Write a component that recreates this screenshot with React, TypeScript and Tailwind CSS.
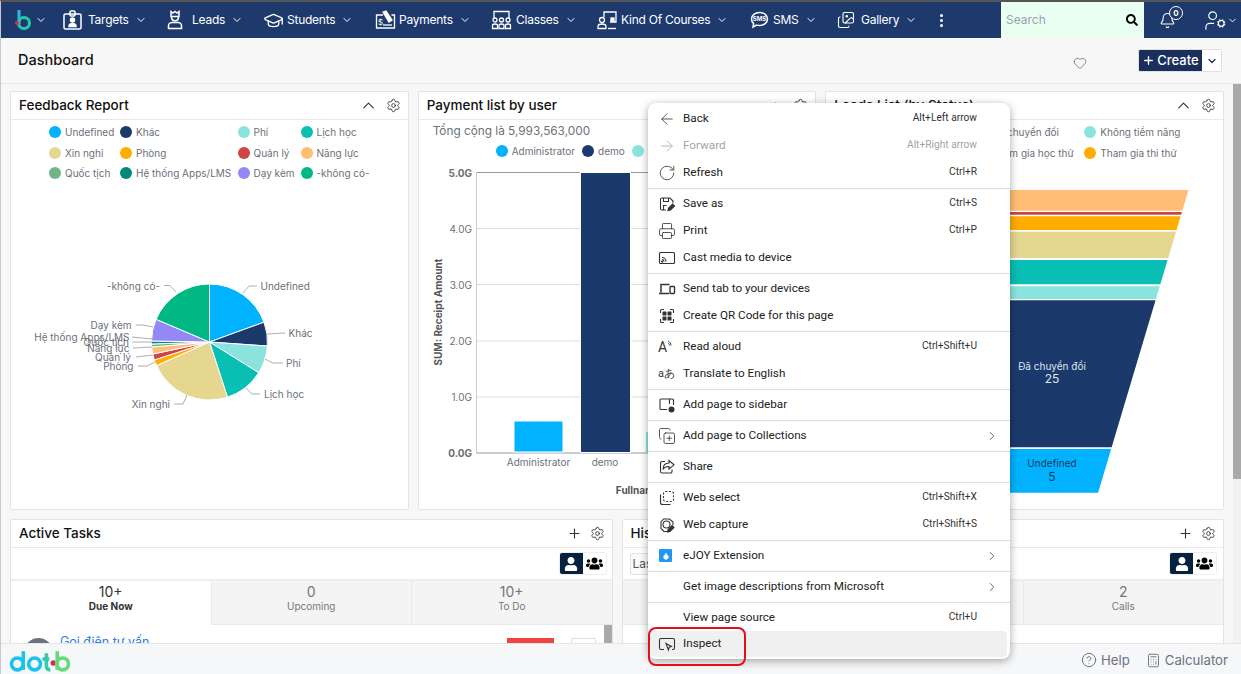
import type { ReactNode } from 'react';
import {
  ArrowLeft, ArrowRight, Bell, Calculator, ChevronDown, ChevronRight, ChevronUp, CircleHelp,
  CopyPlus, Droplet, GraduationCap, Heart, Images, Plus, Printer, RotateCw,
  Settings, UserCog,
} from 'lucide-react';
import { FaSearch, FaUser, FaUsers } from 'react-icons/fa';

const sans = 'font-["Inter",sans-serif]';

function TargetsIcon() {
  return (
    <svg width="19" height="20" viewBox="0 0 19 20" fill="none" stroke="white" strokeWidth="1.5">
      <rect x="1" y="4" width="17" height="15" rx="1.5" />
      <rect x="7" y="1" width="5" height="5" rx="1" />
      <circle cx="9.5" cy="10" r="2" fill="white" />
      <path d="M6 16.5c0-4 7-4 7 0z" fill="white" />
    </svg>
  );
}

function LeadsIcon() {
  return (
    <svg width="16" height="20" viewBox="0 0 16 20" fill="none" stroke="white" strokeWidth="1.5">
      <path d="M4 1.5l2 1.5 2-1.5 2 1.5 2-1.5v5H4z" />
      <path d="M4.5 7c0 5 7 5 7 0" />
      <path d="M1.5 18.5v-3c0-2 2-3 3.500-3h6c1.500 0 3.500 1 3.500 3v3z" />
    </svg>
  );
}

function PaymentsIcon() {
  return (
    <svg width="21" height="20" viewBox="0 0 21 20" fill="none" stroke="white" strokeWidth="1.3">
      <path d="M8 5H1.500v13h18V5h-3" />
      <path d="M8 2l3 -1 6 9-3 2z" fill="white" />
      <text x="3" y="15" fill="white" stroke="none" fontSize="8" fontFamily="Inter">$</text>
      <path d="M8 15h9" />
    </svg>
  );
}

function ClassesIcon() {
  return (
    <svg width="21" height="20" viewBox="0 0 21 20" fill="none" stroke="white" strokeWidth="1.300">
      <path d="M3 8V1.500h15V8" />
      {[4, 10.5, 17].map((x) => (
        <g key={x}>
          <circle cx={x} cy="10" r="2" />
          <path d={`M${x - 2.500} 18.500v-3c0-2 5-2 5 0v3z`} />
        </g>
      ))}
    </svg>
  );
}

function CoursesIcon() {
  return (
    <svg width="21" height="20" viewBox="0 0 21 20" fill="none" stroke="white" strokeWidth="1.300">
      <path d="M7 7V2h12v10h-6" />
      <rect x="14" y="8" width="3" height="3" fill="white" />
      <circle cx="5" cy="10" r="2.500" />
      <path d="M1 18.500v-2c0-2 2-2.500 4-2.500s4 .5 4 2.500v2z" />
      <path d="M11 18.500h8" />
    </svg>
  );
}

function SmsIcon() {
  return (
    <svg width="19" height="18" viewBox="0 0 19 18" fill="none" stroke="white" strokeWidth="1.500">
      <path d="M9.500 1.500c4.500 0 8 2.800 8 6.500s-3.500 6.500-8 6.500c-1 0-2-.1-3-.4L3 16l.6-3.400C2.300 11.400 1.500 9.800 1.500 8c0-3.700 3.500-6.500 8-6.500z" />
      <text x="9.500" y="10" textAnchor="middle" fill="white" stroke="none" fontSize="6" fontWeight="700" fontFamily="Inter">SMS</text>
    </svg>
  );
}

function BrandMark() {
  return (
    <svg width="17" height="22" viewBox="0 0 17 22">
      <path d="M4 1v14" stroke="#2bb8e6" strokeWidth="3" fill="none" />
      <circle cx="9" cy="14" r="5.500" stroke="#25c9a8" strokeWidth="3" fill="none" />
      <circle cx="2" cy="14" r="2" fill="#e0245e" />
    </svg>
  );
}

function DotbLogo() {
  return (
    <svg width="61" height="24" viewBox="0 0 62 24" fill="none" strokeWidth="3.600">
      <circle cx="8.500" cy="15" r="6" stroke="#1cc2ee" />
      <path d="M14.500 2v19" stroke="#1cc2ee" />
      <circle cx="26" cy="15" r="6" stroke="#1cc2ee" />
      <path d="M38 4v13c0 3 2 4 4 4" stroke="#35c9b0" />
      <path d="M34 10h7" stroke="#35c9b0" />
      <circle cx="45" cy="14" r="2.800" fill="#e0245e" stroke="none" />
      <path d="M49 2v19" stroke="#66d97e" />
      <circle cx="54.500" cy="15" r="6" stroke="#66d97e" />
    </svg>
  );
}

const navItems: { label: string; icon: ReactNode; cls: string }[] = [
  { label: 'Targets', icon: <TargetsIcon />, cls: 'w-[104px] gap-[6px]' },
  { label: 'Leads', icon: <LeadsIcon />, cls: 'w-[96px] gap-[9px]' },
  { label: 'Students', icon: <GraduationCap size={21} strokeWidth={1.500} />, cls: 'w-[112px] gap-[3px]' },
  { label: 'Payments', icon: <PaymentsIcon />, cls: 'w-[116px] gap-[3px]' },
  { label: 'Classes', icon: <ClassesIcon />, cls: 'w-[106px] gap-[4px]' },
  { label: 'Kind Of Courses', icon: <CoursesIcon />, cls: 'w-[153px] gap-[3px]' },
  { label: 'SMS', icon: <SmsIcon />, cls: 'w-[87px] gap-[4px]' },
  { label: 'Gallery', icon: <Images size={18} strokeWidth={1.500} />, cls: 'w-[100px] gap-[6px]' },
];

function NavBar() {
  return (
    <header className="flex h-[36px] shrink-0 items-center bg-[#1e3a6d] text-white">
      <div className="flex w-[62px] items-center pl-[14px]">
        <BrandMark />
        <ChevronDown size={12} className="ml-[3px]" />
      </div>
      {navItems.map((item) => (
        <div key={item.label} className={`flex shrink-0 items-center ${item.cls}`}>
          {item.icon}
          <span className="flex items-center gap-[6px]">
            <span className="text-[12px] leading-none tracking-[-0.25px]">{item.label}</span>
            <ChevronDown size={12} />
          </span>
        </div>
      ))}
      <div className="flex w-[64px] shrink-0 flex-col items-start gap-[2px] pl-[3px]">
        <span className="h-[3px] w-[3px] rounded-full bg-white" />
        <span className="h-[3px] w-[3px] rounded-full bg-white" />
        <span className="h-[3px] w-[3px] rounded-full bg-white" />
      </div>
      <div className="flex h-full w-[143px] shrink-0 items-center justify-between bg-[#e9fff2] pl-[5px] pr-[6px]">
        <span className="text-[12px] text-[#9aa3ad]">Search</span>
        <FaSearch size={12} className="text-black" />
      </div>
      <div className="relative ml-[15px] w-[45px] shrink-0">
        <Bell size={17} strokeWidth={1.500} />
        <span className="absolute left-[10px] top-[-6px] flex h-[14px] w-[14px] items-center justify-center rounded-full border border-white bg-[#1e3a6d] text-[8px] font-bold">0</span>
      </div>
      <UserCog size={23} strokeWidth={1.200} className="shrink-0" />
      <ChevronDown size={11} className="shrink-0" />
    </header>
  );
}

function SubHeader() {
  return (
    <div className="flex h-[46px] shrink-0 items-center border-b border-[#e8e8e8] bg-[#f7f7f7] pl-[17px] pr-[19px]">
      <h1 className="mb-[2px] text-[14.500px] font-medium text-[#111]">Dashboard</h1>
      <Heart size={14} strokeWidth={1.300} className="ml-auto mt-[5px] text-[#667]" />
      <div className="ml-[51px] flex h-[23px] overflow-hidden rounded-[2px] border border-[#e0e0e0]">
        <button className="flex w-[63px] items-center justify-center gap-[2px] bg-[#1a2f5c] text-[13px] font-medium text-white">
          <Plus size={13} strokeWidth={2.500} />
          Create
        </button>
        <span className="flex w-[19px] items-center justify-center bg-white text-[#1a2f5c]">
          <ChevronDown size={12} strokeWidth={2.500} />
        </span>
      </div>
    </div>
  );
}

function CardHeader({ title, action }: { title: string; action: 'collapse' | 'add' }) {
  return (
    <div className="flex h-[28px] shrink-0 items-center justify-between border-b border-[#e9e9e9] pl-[8px] pr-[7px]">
      <h2 className="text-[13.500px] font-medium leading-none text-[#111]">{title}</h2>
      <div className="flex items-center gap-[8px] text-[#333]">
        {action === 'collapse' ? <ChevronUp size={19} strokeWidth={1.400} /> : <Plus size={15} strokeWidth={1.800} />}
        <Settings size={15} strokeWidth={1.400} />
      </div>
    </div>
  );
}

function LegendItem({ color, label }: { color: string; label: string }) {
  return (
    <div className="flex items-center gap-[4px] whitespace-nowrap">
      <span className="h-[12px] w-[12px] shrink-0 rounded-full" style={{ backgroundColor: color }} />
      <span className="text-[10px] leading-none text-[#6e7079]">{label}</span>
    </div>
  );
}

const feedbackLegend = [
  ['Undefined', '#00b2ff'], ['Khác', '#1b3a6b'], ['Phí', '#8be3dd'], ['Lịch học', '#09bfb3'],
  ['Xin nghỉ', '#e5d690'], ['Phòng', '#ffae00'], ['Quản lý', '#cf4444'], ['Năng lực', '#ffbe73'],
  ['Quốc tịch', '#6eb589'], ['Hệ thống Apps/LMS', '#00897b'], ['Dạy kèm', '#9488f7'], ['-không có-', '#00b884'],
];

const pieSlices: [number, number, string][] = [
  [0, 70, '#00b2ff'], [70, 94, '#1b3a6b'], [94, 122, '#8be3dd'], [122, 162, '#09bfb3'], [162, 246, '#e5d690'],
  [246, 252, '#ffae00'], [252, 258, '#cf4444'], [258, 265, '#ffbe73'], [265, 268, '#6eb589'], [268, 271, '#00897b'],
  [271, 293, '#9488f7'], [293, 360, '#00b884'],
];

const pieLabels: [string, number, number, 'start' | 'end', string][] = [
  ['-không có-', 160, 290, 'end', '164,285.500 170,285.500 176,292'],
  ['Undefined', 260.500, 290, 'start', '243,293 249,286 257,286'],
  ['Khác', 288.500, 337, 'start', '267,334 285,333'],
  ['Phí', 286, 367, 'start', '265,359 273,363 283,363'],
  ['Lịch học', 264, 398, 'start', '246,388 252,394 260,394'],
  ['Xin nghỉ', 170, 407.500, 'end', '174,404 183,404 187,395'],
  ['Phòng', 133.500, 369.500, 'end', '138,366 147,366 155,362'],
  ['Quản lý', 131, 361, 'end', '136,357 153,355'],
  ['Năng lực', 129.500, 352, 'end', '133,348 152,347'],
  ['Quốc tịch', 129, 346, 'end', '132,342 152,342'],
  ['Hệ thống Apps/LMS', 129.500, 341, 'end', '132,337 152,339'],
  ['Dạy kèm', 131.500, 328.500, 'end', '136,325 143,325 153,327'],
];

function slicePath(from: number, to: number) {
  const cx = 209.500;
  const cy = 342;
  const r = 58;
  const pt = (deg: number) => {
    const a = (deg * Math.PI) / 180;
    return `${cx + r * Math.sin(a)} ${cy - r * Math.cos(a)}`;
  };
  return `M${cx} ${cy}L${pt(from)}A${r} ${r} 0 ${to - from > 180 ? 1 : 0} 1 ${pt(to)}Z`;
}

function FeedbackCard() {
  return (
    <section className="flex h-full flex-col rounded-[2px] border border-[#e3e3e3] bg-white">
      <CardHeader title="Feedback Report" action="collapse" />
      <div className="grid grid-cols-[71px_117.500px_63px_auto] gap-y-[8.500px] pl-[38px] pt-[6px]">
        {feedbackLegend.map(([label, color]) => (
          <LegendItem key={label} label={label} color={color} />
        ))}
      </div>
      <svg viewBox="11 184 396 325" className="mt-auto h-[325px] w-[396px]">
        {pieSlices.map(([from, to, color]) => (
          <path key={color} d={slicePath(from, to)} fill={color} stroke="white" strokeWidth="1" />
        ))}
        {pieLabels.map(([label, x, y, anchor, line]) => (
          <g key={label}>
            <polyline points={line} fill="none" stroke="#9a9a9a" strokeWidth="0.800" />
            <text x={x} y={y} textAnchor={anchor} fontSize="10" fill="#6e7079" fontFamily="Inter">{label}</text>
          </g>
        ))}
      </svg>
    </section>
  );
}

function PaymentCard() {
  const ticks = [['5.0G', 172.500], ['4.0G', 228.500], ['3.0G', 284.500], ['2.0G', 341], ['1.0G', 397], ['0.0G', 453]] as const;
  return (
    <section className="flex h-full flex-col rounded-[2px] border border-[#e3e3e3] bg-white">
      <CardHeader title="Payment list by user" action="collapse" />
      <p className="pl-[14px] pt-[4px] text-[11.800px] leading-[14px] text-[#6e7079]">Tổng cộng là 5,993,563,000</p>
      <div className="flex gap-[7px] pl-[77px] pt-[7px]">
        <LegendItem color="#00b2ff" label="Administrator" />
        <LegendItem color="#1b3a6b" label="demo" />
        <LegendItem color="#8be3dd" label="Tổng" />
      </div>
      <svg viewBox="419 165 396 344" className="mt-auto h-[344px] w-[396px]">
        {ticks.map(([label, y], i) => (
          <g key={label}>
            <line x1="476" x2="815" y1={y} y2={y} stroke={i === 0 ? '#999' : i === 5 ? '#ccc' : '#ddd'} strokeWidth={i === 5 ? 2 : 1} />
            <text x="472" y={y + 4} textAnchor="end" fontSize="10" fontFamily="Inter" fontWeight={i === 0 || i === 5 ? 700 : 400} fill="#6e7079">{label}</text>
          </g>
        ))}
        <line x1="476.500" x2="476.500" y1="172" y2="453" stroke="#ccc" />
        <rect x="514" y="421" width="49" height="31" fill="#00b2ff" stroke="white" />
        <rect x="580.500" y="172.500" width="50" height="280" fill="#1b3a6b" stroke="white" />
        <rect x="646" y="432" width="50" height="20" fill="#8be3dd" />
        <text x="538.500" y="465.500" textAnchor="middle" fontSize="10" fontFamily="Inter" fill="#6e7079">Administrator</text>
        <text x="605" y="465.500" textAnchor="middle" fontSize="10" fontFamily="Inter" fill="#6e7079">demo</text>
        <text x="638" y="494" textAnchor="middle" fontSize="10" fontWeight="700" fontFamily="Inter" fill="#555">Fullname</text>
        <text transform="translate(442 312) rotate(-90)" textAnchor="middle" fontSize="10" fontWeight="700" fontFamily="Inter" fill="#555">SUM: Receipt Amount</text>
      </svg>
    </section>
  );
}

const funnelBands: [number, number, string][] = [
  [190, 210.700, '#ffbe73'], [212, 214.700, '#cf4444'], [216.300, 230, '#ffae00'], [231.700, 258, '#e5d690'],
  [260, 284.300, '#09bfb3'], [286.300, 299, '#8be3dd'], [300.300, 447.300, '#1b3a6b'], [449, 492.700, '#00b2ff'],
];

function funnelPoints(top: number, bottom: number) {
  const half = (y: number) => 136.500 - (y - 190) * 0.2987;
  return `${1052 - half(top)},${top} ${1052 + half(top)},${top} ${1052 + half(bottom)},${bottom} ${1052 - half(bottom)},${bottom}`;
}

function LeadsCard() {
  return (
    <section className="flex h-full flex-col rounded-[2px] border border-[#e3e3e3] bg-white">
      <CardHeader title="Leads List (by Status)" action="collapse" />
      <div className="grid grid-cols-[109px_auto] justify-start gap-y-[8.500px] pl-[149px] pt-[6px]">
        <LegendItem color="#1b3a6b" label="Đã chuyển đổi" />
        <LegendItem color="#8be3dd" label="Không tiềm năng" />
        <LegendItem color="#09bfb3" label="Tham gia học thử" />
        <LegendItem color="#ffae00" label="Tham gia thi thử" />
      </div>
      <svg viewBox="826 184 396 325" className="mt-auto h-[325px] w-[396px]">
        {funnelBands.map(([top, bottom, color]) => (
          <polygon key={color} points={funnelPoints(top, bottom)} fill={color} />
        ))}
        <text x="1052" y="370" textAnchor="middle" fontSize="10" fontFamily="Inter" fill="#dfe5ee">Đã chuyển đổi</text>
        <text x="1052" y="383" textAnchor="middle" fontSize="12" fontFamily="Inter" fill="#dfe5ee">25</text>
        <text x="1052" y="467" textAnchor="middle" fontSize="10" fontFamily="Inter" fill="#123a5c">Undefined</text>
        <text x="1052" y="481" textAnchor="middle" fontSize="12" fontFamily="Inter" fill="#123a5c">5</text>
      </svg>
    </section>
  );
}

function ViewToggle() {
  return (
    <div className="flex h-[23px] overflow-hidden rounded-[3px] border border-[#eee]">
      <span className="flex w-[23px] items-center justify-center bg-[#06213d] text-white"><FaUser size={14} /></span>
      <span className="flex w-[23px] items-center justify-center bg-white text-black"><FaUsers size={17} /></span>
    </div>
  );
}

function Tab({ value, label, active }: { value: string; label: string; active?: boolean }) {
  return (
    <div className={`flex h-[44px] flex-1 flex-col items-center border-b border-l border-[#e9e9e9] pt-[2px] first:border-l-0 ${active ? 'border-b-transparent bg-white text-[#333]' : 'bg-[#f4f4f4] text-[#777]'}`}>
      <span className="text-[14px] leading-[18px]">{value}</span>
      <span className={`text-[10px] leading-[11px] ${active ? 'font-bold' : ''}`}>{label}</span>
    </div>
  );
}

function ActiveTasksCard() {
  return (
    <section className="flex h-[190px] flex-col rounded-[2px] border border-[#e3e3e3] bg-white">
      <CardHeader title="Active Tasks" action="add" />
      <div className="flex h-[33px] shrink-0 items-center justify-end border-b-2 border-[#eee] pr-[5px]"><ViewToggle /></div>
      <div className="flex shrink-0">
        <Tab value="10+" label="Due Now" active />
        <Tab value="0" label="Upcoming" />
        <Tab value="10+" label="To Do" />
      </div>
      <div className="flex flex-1">
        <div className="flex flex-1 items-start pl-[13px] pr-[8px] pt-[13px]">
          <span className="h-[29px] w-[29px] shrink-0 rounded-full bg-[#6b7280]" />
          <a className="ml-[7px] mt-[-5px] text-[12.500px] text-[#2a7de1]">Gọi điện tư vấn</a>
          <span className="ml-auto h-[18px] w-[47px] bg-[#ef4444]" />
          <span className="ml-[17px] h-[22px] w-[25px] rounded-[2px] border border-[#ddd]" />
        </div>
        <div className="h-full w-[8px] bg-[#a9a9a9]" />
      </div>
    </section>
  );
}

function HistoryCard() {
  return (
    <section className="flex h-[190px] flex-col rounded-[2px] border border-[#e3e3e3] bg-white">
      <CardHeader title="History" action="add" />
      <div className="flex h-[33px] shrink-0 items-center justify-between border-b-2 border-[#eee] pl-[7px] pr-[6px]">
        <span className="flex h-[22px] w-[120px] items-center rounded-[2px] border border-[#e3e3e3] bg-[#fafafa] pl-[2px] text-[12px] text-[#555]">Last 7 days</span>
        <ViewToggle />
      </div>
      <div className="flex shrink-0">
        <Tab value="0" label="Meetings" />
        <Tab value="0" label="Emails" />
        <Tab value="2" label="Calls" />
      </div>
    </section>
  );
}

function Dashboard() {
  return (
    <main className="flex min-h-0 flex-1">
      <div className="flex min-w-0 flex-1 flex-col gap-[9px] overflow-hidden pl-[9px] pr-[9px] pt-[7px]">
        <div className="grid h-[419px] shrink-0 grid-cols-3 gap-[9px]">
          <FeedbackCard />
          <PaymentCard />
          <LeadsCard />
        </div>
        <div className="grid shrink-0 grid-cols-2 gap-[9px]">
          <ActiveTasksCard />
          <HistoryCard />
        </div>
      </div>
      <div className="w-[8px] shrink-0 bg-[#f1f1f1]">
        <div className="h-[395px] bg-[#a9a9a9]" />
      </div>
    </main>
  );
}

function Footer() {
  return (
    <footer className="z-10 flex h-[31px] shrink-0 items-center border-t border-[#e5e5e5] bg-[#f6f7f9] pl-[8px] pr-[13px] pt-[3px] text-[13.200px] text-[#6b7280]">
      <DotbLogo />
      <div className="ml-auto flex items-center gap-[4px]">
        <CircleHelp size={16} strokeWidth={1.500} />
        Help
      </div>
      <div className="ml-[16px] flex items-center gap-[4px]">
        <Calculator size={15} strokeWidth={1.500} />
        Calculator
      </div>
    </footer>
  );
}

const glyph = { width: 18, height: 18, viewBox: '0 0 18 18', fill: 'none', stroke: '#333', strokeWidth: 1.100 };

function SaveAsIcon() {
  return (
    <svg {...glyph}>
      <path d="M8 15H4a1.500 1.500 0 0 1-1.500-1.500v-9A1.500 1.500 0 0 1 4 3h8l3 3v2" />
      <path d="M5.500 3v3.500h5V3M5.500 15v-4.500h3" />
      <path d="M10 15.500l.6-2.500 4-4 1.900 1.900-4 4z" fill="#333" />
    </svg>
  );
}

function CastIcon() {
  return (
    <svg {...glyph}>
      <rect x="1.500" y="3.500" width="15" height="11" rx="1" />
      <path d="M4 8.500a4 4 0 0 1 4 4M4 10.500a2 2 0 0 1 2 2" />
      <circle cx="4.200" cy="12.600" r=".6" fill="#333" />
    </svg>
  );
}

function SendTabIcon() {
  return (
    <svg {...glyph}>
      <path d="M3 12.500V4.500h8.500M1 13.500h10" strokeWidth="1.500" />
      <rect x="12" y="6.500" width="4.500" height="7" rx=".7" strokeWidth="1.400" />
    </svg>
  );
}

function QrIcon() {
  return (
    <svg {...glyph}>
      <path d="M2.500 6V3.500a1 1 0 0 1 1-1H6M12 2.500h2.500a1 1 0 0 1 1 1V6M15.500 12v2.500a1 1 0 0 1-1 1H12M6 15.500H3.500a1 1 0 0 1-1-1V12" />
      <g fill="#333" stroke="none">
        <rect x="4.500" y="4.500" width="4" height="4" rx=".6" />
        <rect x="9.500" y="4.500" width="4" height="4" rx=".6" />
        <rect x="4.500" y="9.500" width="4" height="4" rx=".6" />
        <rect x="9.500" y="9.500" width="4" height="4" rx=".6" />
      </g>
    </svg>
  );
}

function AloudIcon() {
  return (
    <span className="flex w-[18px] items-start text-[14px] leading-none text-[#333]">
      A
      <svg width="7" height="9" viewBox="0 0 7 9" fill="none" stroke="#333" strokeWidth="0.900">
        <path d="M1 1c2 1 3 2.500 3 4.500M1 3c1 .6 1.500 1.500 1.500 2.500" />
      </svg>
    </span>
  );
}

function SidebarIcon() {
  return (
    <svg {...glyph}>
      <path d="M9 13.500H3a1 1 0 0 1-1-1v-8.500a1 1 0 0 1 1-1h11.500a1 1 0 0 1 1 1V9M11.500 3v5" />
      <circle cx="13.500" cy="13.500" r="3" fill="#333" stroke="none" />
    </svg>
  );
}

function ShareIcon() {
  return (
    <svg {...glyph}>
      <path d="M7 3.500H4a1.500 1.500 0 0 0-1.500 1.500v8.500A1.500 1.500 0 0 0 4 15h8.500a1.500 1.500 0 0 0 1.500-1.500v-2" />
      <path d="M11 2.500l5 4.300-5 4.200V8.500c-3 0-5 1-6 3 0-4 2-6.500 6-6.500z" />
    </svg>
  );
}

function WebSelectIcon() {
  return (
    <svg {...glyph}>
      <rect x="5.500" y="2.500" width="10" height="10" rx="2" strokeDasharray="2 1.500" />
      <path d="M3 5.500a1.500 1.500 0 0 0-.5 1v7a2 2 0 0 0 2 2h7a1.500 1.500 0 0 0 1-.5" />
    </svg>
  );
}

function WebCaptureIcon() {
  return (
    <svg {...glyph}>
      <path d="M2.500 6.500l3-3.500h6l3.500 3v3M3 6.500v6l3 3h3" />
      <circle cx="8.500" cy="8.500" r="3.500" />
      <path d="M9.500 16l.6-2.500 4-4 1.900 1.900-4 4z" fill="#333" />
    </svg>
  );
}

function InspectIcon() {
  return (
    <svg {...glyph}>
      <path d="M6 14.500H3a1.500 1.500 0 0 1-1.500-1.500V5A1.500 1.500 0 0 1 3 3.500h12A1.500 1.500 0 0 1 16.500 5v8a1.500 1.500 0 0 1-1.500 1.500h-1" />
      <path d="M8 8.500l5.500 3-2.300.8-.8 2.700z" />
    </svg>
  );
}

type MenuEntry = { label: string; icon?: ReactNode; shortcut?: string; arrow?: boolean; disabled?: boolean; hover?: boolean };

const ic = { size: 18, strokeWidth: 1.100, color: '#333' };

const menuGroups: MenuEntry[][] = [
  [
    { label: 'Back', icon: <ArrowLeft {...ic} />, shortcut: 'Alt+Left arrow' },
    { label: 'Forward', icon: <ArrowRight {...ic} color="#aaa" />, shortcut: 'Alt+Right arrow', disabled: true },
    { label: 'Refresh', icon: <RotateCw {...ic} />, shortcut: 'Ctrl+R' },
  ],
  [
    { label: 'Save as', icon: <SaveAsIcon />, shortcut: 'Ctrl+S' },
    { label: 'Print', icon: <Printer {...ic} />, shortcut: 'Ctrl+P' },
    { label: 'Cast media to device', icon: <CastIcon /> },
  ],
  [
    { label: 'Send tab to your devices', icon: <SendTabIcon /> },
    { label: 'Create QR Code for this page', icon: <QrIcon /> },
  ],
  [
    { label: 'Read aloud', icon: <AloudIcon />, shortcut: 'Ctrl+Shift+U' },
    { label: 'Translate to English', icon: <span className="whitespace-nowrap text-[11px] leading-none text-[#333]">aあ</span> },
  ],
  [{ label: 'Add page to sidebar', icon: <SidebarIcon /> }],
  [{ label: 'Add page to Collections', icon: <CopyPlus {...ic} />, arrow: true }],
  [{ label: 'Share', icon: <ShareIcon /> }],
  [
    { label: 'Web select', icon: <WebSelectIcon />, shortcut: 'Ctrl+Shift+X' },
    { label: 'Web capture', icon: <WebCaptureIcon />, shortcut: 'Ctrl+Shift+S' },
  ],
  [{
    label: 'eJOY Extension',
    icon: (
      <span className="ml-[1px] flex h-[13px] w-[13px] items-center justify-center rounded-[1px] bg-[#2196f3]">
        <Droplet size={8} fill="white" color="white" />
      </span>
    ),
    arrow: true,
  }],
  [{ label: 'Get image descriptions from Microsoft', arrow: true }],
  [
    { label: 'View page source', shortcut: 'Ctrl+U' },
    { label: 'Inspect', icon: <InspectIcon />, hover: true },
  ],
];

function MenuRow({ entry }: { entry: MenuEntry }) {
  return (
    <div className={`mx-[3px] flex items-center rounded-[4px] pl-[7px] pr-[8px] ${entry.hover ? 'h-[26px] bg-[#f0f0f0]' : 'h-[27px]'}`}>
      <span className="flex w-[25px] shrink-0 items-center">{entry.icon}</span>
      <span className={`text-[11.700px] leading-none ${entry.disabled ? 'text-[#a3a3a3]' : 'text-[#222]'}`}>{entry.label}</span>
      {entry.shortcut && (
        <span className={`ml-auto mr-[22px] text-[10.200px] leading-none ${entry.disabled ? 'text-[#a3a3a3]' : 'text-[#333]'}`}>{entry.shortcut}</span>
      )}
      {entry.arrow && <ChevronRight size={14} strokeWidth={1.300} className="ml-auto text-[#333]" />}
    </div>
  );
}

function ContextMenu() {
  return (
    <div className="absolute left-[647px] top-[101px] z-20 w-[362px] rounded-[8px] bg-white pb-[2px] pt-[2px] font-['Roboto',sans-serif] shadow-[0_2px_8px_rgba(0,0,0,0.35)]">
      {menuGroups.map((group, i) => (
        <div key={i}>
          {i > 0 && (
            <div className="flex h-[4px] items-center">
              <div className="h-px w-full bg-[#dcdcdc]" />
            </div>
          )}
          {group.map((entry) => (
            <MenuRow key={entry.label} entry={entry} />
          ))}
        </div>
      ))}
    </div>
  );
}

export default function App() {
  return (
    <div className={`relative flex h-[674px] w-[1241px] flex-col overflow-hidden border-l border-t-2 border-l-[#c9c9c9] border-t-[#555] bg-[#f6f7f9] ${sans}`}>
      <NavBar />
      <SubHeader />
      <Dashboard />
      <Footer />
      <ContextMenu />
      {/* red marker round Inspect */}
      <div className="absolute left-[647px] top-[625px] z-30 h-[39px] w-[98px] rounded-[8px] border-2 border-[#e0101c]" />
    </div>
  );
}
